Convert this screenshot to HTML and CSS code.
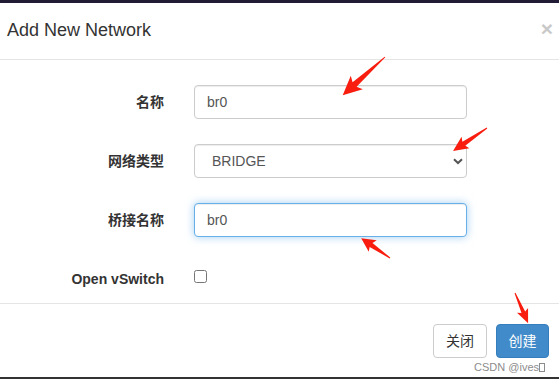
FILE: index.html
```
<!DOCTYPE html>
<html lang="zh">
<head>
    <meta charset="UTF-8">
    <title>Add New Network</title>
    <link rel="stylesheet" href="styles.css">
</head>
<body>
    <div class="modal">
        <div class="modal-header">
            <h4 class="modal-title">Add New Network</h4>
            <span class="close">&times;</span>
        </div>

        <div class="modal-body">
            <div class="form-row">
                <label class="form-label">名称</label>
                <input type="text" class="form-control" value="br0">
            </div>

            <div class="form-row">
                <label class="form-label">网络类型</label>
                <div class="select-wrap">
                    <select class="form-control select">
                        <option>BRIDGE</option>
                    </select>
                    <svg class="chevron" width="10" height="7" viewBox="0 0 10 7">
                        <path d="M1 1.2 L5 5 L9 1.2" fill="none" stroke="#555" stroke-width="2"/>
                    </svg>
                </div>
            </div>

            <div class="form-row">
                <label class="form-label">桥接名称</label>
                <input type="text" class="form-control is-focus" value="br0">
            </div>

            <div class="form-row">
                <label class="form-label">Open vSwitch</label>
                <div class="check-cell">
                    <input type="checkbox" class="checkbox">
                </div>
            </div>
        </div>

        <div class="modal-footer">
            <div class="btn-row">
                <button class="btn btn-default">关闭</button>
                <button class="btn btn-primary">创建</button>
            </div>
            <div class="watermark">CSDN @ives<span class="tofu"></span></div>
        </div>

        <!-- annotation arrows from the screenshot -->
        <svg class="arrows" width="559" height="379" viewBox="0 0 559 379">
            <g fill="#f81d0f">
                <polygon transform="translate(385 57) rotate(137.9)" points="0,-0.5 41,-3 38,-9 57,0 38,9 41,3 0,0.5"/>
                <polygon transform="translate(487 128) rotate(145.9)" points="0,-0.5 28,-2.5 26,-7 41,0 26,7 28,2.5 0,0.5"/>
                <polygon transform="translate(390 258) rotate(-145.4)" points="0,-0.5 23,-2.5 21,-7 35,0 21,7 23,2.5 0,0.5"/>
                <polygon transform="translate(515 293) rotate(66.6)" points="0,-0.5 21,-2 19,-6 33,0 19,6 21,2 0,0.5"/>
            </g>
        </svg>
    </div>
</body>
</html>
```

FILE: styles.css
```
* {
    margin: 0;
    padding: 0;
    box-sizing: border-box;
}

body {
    font-family: 'Liberation Sans', Arial, 'Noto Sans CJK SC', sans-serif;
    font-size: 14px;
    color: #333;
    background: #fff;
    overflow: hidden;
}

.modal {
    position: relative;
    width: 559px;
    height: 379px;
    display: flex;
    flex-direction: column;
    border-top: 3px solid #221b36;
    border-bottom: 2px solid #333;
}

.modal-header {
    height: 57px;
    padding: 0 6px 0 7px;
    display: flex;
    justify-content: space-between;
    align-items: center;
    border-bottom: 1px solid #e5e5e5;
}

.modal-title {
    font-size: 18px;
    font-weight: 400;
    line-height: 20px;
    margin-top: -2px;
    color: #333;
}

.close {
    font-size: 21px;
    font-weight: 700;
    line-height: 1;
    color: #c9c9c9;
    margin-top: -6px;
}

.modal-body {
    padding: 25px 0 7px;
    display: flex;
    flex-direction: column;
    gap: 25px;
    border-bottom: 1px solid #e5e5e5;
}

.form-row {
    display: grid;
    grid-template-columns: 164px 273px;
    column-gap: 30px;
    height: 34px;
}

.form-label {
    font-weight: 700;
    line-height: 34px;
    text-align: right;
    color: #333;
}

.form-control {
    width: 273px;
    height: 34px;
    padding: 6px 12px;
    font-family: inherit;
    font-size: 14px;
    color: #555;
    background: #fff;
    border: 1px solid #ccc;
    border-radius: 4px;
    box-shadow: inset 0 1px 1px rgba(0,0,0,0.075);
    outline: none;
}

.form-control.is-focus {
    border-color: #66afe9;
    box-shadow: inset 0 1px 1px rgba(0,0,0,0.075), 0 0 8px rgba(102,175,233,0.6);
}

.select-wrap {
    position: relative;
}

.select {
    appearance: none;
    -webkit-appearance: none;
    padding-left: 17px;
}

.chevron {
    position: absolute;
    left: 259px;
    top: 14px;
}

.check-cell {
    padding-top: 8px;
}

.checkbox {
    width: 13px;
    height: 13px;
    margin: 0;
    display: block;
}

.modal-footer {
    flex: 1;
    padding: 20px 10px 0 0;
    display: flex;
    flex-direction: column;
    align-items: flex-end;
}

.btn-row {
    display: flex;
    gap: 9px;
}

.btn {
    height: 34px;
    padding: 6px 0;
    font-family: inherit;
    font-size: 14px;
    line-height: 20px;
    text-align: center;
    white-space: nowrap;
    border: 1px solid transparent;
    border-radius: 4px;
    cursor: pointer;
}

.btn-default {
    width: 54px;
    color: #333;
    background: #fff;
    border-color: #ccc;
}

.btn-primary {
    width: 53px;
    color: #fff;
    background: #428bca;
    border-color: #357ebd;
}

.watermark {
    margin-top: 3px;
    margin-right: 4px;
    font-size: 11px;
    line-height: 13px;
    color: #8c8c8c;
}

.tofu {
    display: inline-block;
    width: 6px;
    height: 9px;
    border: 1px solid #8c8c8c;
    vertical-align: -1px;
}

.arrows {
    position: absolute;
    left: 0;
    top: -3px;
    pointer-events: none;
}
```
